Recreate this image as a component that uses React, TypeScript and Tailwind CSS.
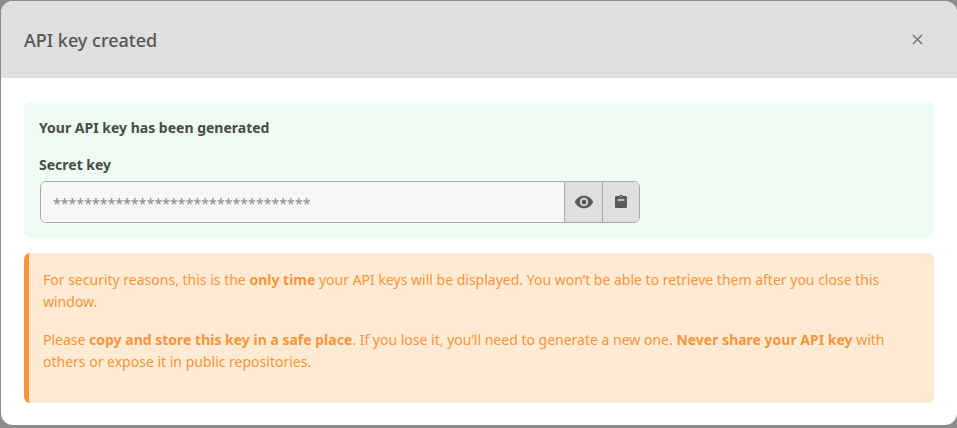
import { X } from "lucide-react";

const font = { fontFamily: '"Noto Sans", sans-serif' };

export default function App() {
  return (
    <div style={font} className="h-[428px] w-[957px] overflow-hidden bg-[#8c8c8c] pl-px pt-px">
      <div className="h-[424px] w-[956px] overflow-hidden rounded-xl bg-white">
        <div className="flex h-[77px] items-center justify-between bg-[#dfdfdf] pl-[23px] pr-[31px]">
          <h1 className="text-lg leading-7 font-medium text-[#555555]">API key created</h1>
          <X className="size-[17px] text-[#777777]" strokeWidth={2} />
        </div>
        <div className="flex flex-col gap-[15px] px-[23px] pt-[24px]">
          <div className="h-[136px] rounded-md bg-[#eefcf3] px-[15px] pt-[16px]">
            <p className="text-sm leading-5 font-bold text-[#4a4a4a]">Your API key has been generated</p>
            <p className="mt-[17px] text-sm leading-5 font-bold text-[#4a4a4a]">Secret key</p>
            <div className="mt-[6px] ml-px flex h-[42px] w-[600px] overflow-hidden rounded-md border border-[#aaaaaa]">
              <div className="flex flex-1 items-center bg-[#f7f7f7] pl-[12px] pt-[4px] text-sm tracking-[0.09px] text-[#8a8a8a]">
                *********************************
              </div>
              <button className="flex w-[38px] items-center justify-center border-l border-[#aaaaaa] bg-[#dfdfdf]">
                <svg viewBox="0 0 24 24" className="size-5 fill-[#5a5a5a]">
                  <path d="M12 4.5C7 4.5 2.73 7.61 1 12c1.73 4.39 6 7.5 11 7.5s9.27-3.11 11-7.5c-1.73-4.39-6-7.5-11-7.5zM12 17c-2.76 0-5-2.24-5-5s2.24-5 5-5 5 2.24 5 5-2.24 5-5 5zm0-8c-1.66 0-3 1.34-3 3s1.34 3 3 3 3-1.34 3-3-1.34-3-3-3z" />
                </svg>
              </button>
              <button className="flex w-[37px] items-center justify-center border-l border-[#aaaaaa] bg-[#dfdfdf]">
                <svg viewBox="0 0 24 24" className="size-5 fill-[#5a5a5a]">
                  <path d="M19 3h-4.18C14.4 1.84 13.3 1 12 1s-2.4.84-2.82 2H5c-1.1 0-2 .9-2 2v14c0 1.1.9 2 2 2h14c1.1 0 2-.9 2-2V5c0-1.1-.9-2-2-2zm-7 0c.55 0 1 .45 1 1s-.45 1-1 1-1-.45-1-1 .45-1 1-1zm5 7H7V8h10v2z" transform="translate(2.4 2.4) scale(0.8)" />
                </svg>
              </button>
            </div>
          </div>
          <div className="h-[150px] rounded-md border-l-[5px] border-[#ff9538] bg-[#ffead4] pl-[14px] pr-[24px] pt-[16px] text-sm leading-[22px] text-[#ff9538]">
            <p>
              For security reasons, this is the <strong className="font-bold">only time</strong> your API keys will be displayed. You won’t be able to retrieve them after you close this window.
            </p>
            <p className="mt-[16px]">
              Please <strong className="font-bold">copy and store this key in a safe place</strong>. If you lose it, you’ll need to generate a new one. <strong className="font-bold">Never share your API key</strong> with others or expose it in public repositories.
            </p>
          </div>
        </div>
      </div>
    </div>
  );
}
